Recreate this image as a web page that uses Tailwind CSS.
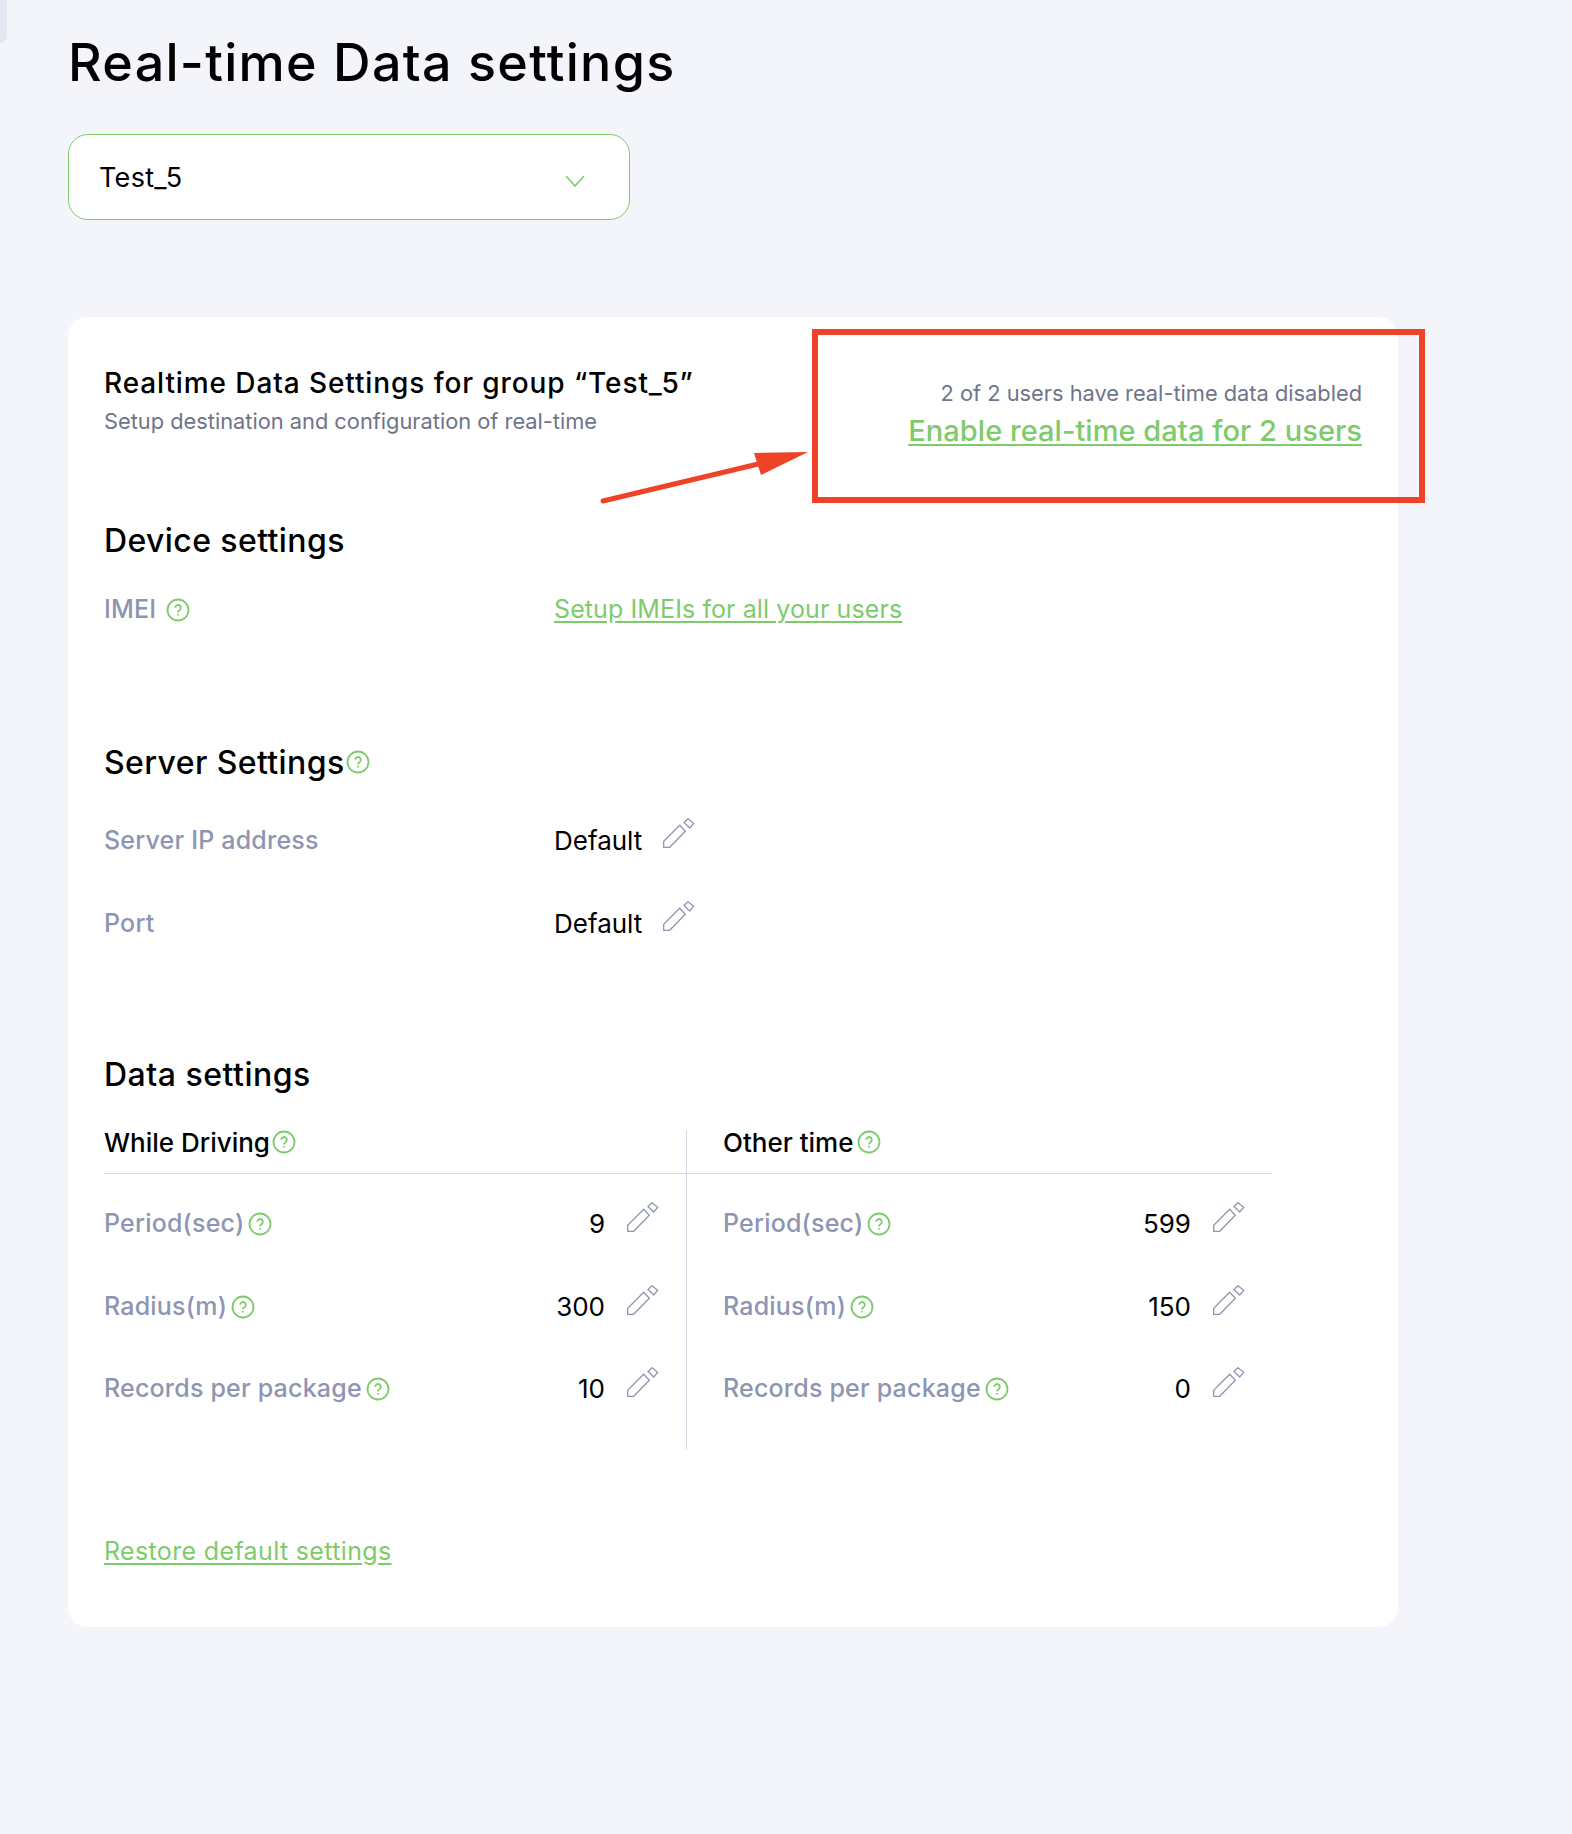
<!DOCTYPE html>
<html lang="en">
<head>
    <meta charset="UTF-8">
    <meta name="viewport" content="width=device-width, initial-scale=1.0">
    <title>Real-time Data settings</title>
    <script src="https://cdn.jsdelivr.net/npm/@tailwindcss/browser@4"></script>
</head>
<body class="bg-[#f3f5fa] text-black font-['Inter',sans-serif]">
    <div class="relative min-h-[1834px] w-[1572px] overflow-hidden">
        <!-- sliver of the collapsed sidebar -->
        <div class="absolute left-0 top-0 w-[7px] h-[43px] bg-[#e4e8f3] rounded-br-md"></div>

        <main class="pl-[68px] pt-[32px] w-[1398px]">
            <h1 class="text-[52px] leading-[62px] font-medium tracking-[1.3px]">Real-time Data settings</h1>

            <div class="mt-[40px] w-[562px] h-[86px] bg-white border border-[#7ecb6c] rounded-[20px] pl-[30px] pr-[44px] flex items-center justify-between">
                <span class="text-[27px] tracking-[.3px] mt-[3px]">Test_5</span>
                <svg class="w-[20px] h-[12px] mt-[8px]" viewBox="0 0 20 12" fill="none" stroke="#7ecb6c" stroke-width="1.6"><path d="M1 1l9 10 9-10"/></svg>
            </div>

            <section class="mt-[97px] bg-white rounded-[20px] h-[1310px] pl-[36px] pr-[36px] pt-[48px]">
                <div class="flex justify-between">
                    <div>
                        <h2 class="text-[28px] leading-[36px] font-medium tracking-[.9px]">Realtime Data Settings for group “Test_5”</h2>
                        <p class="mt-[5px] text-[21.8px] leading-[30px] text-[#6f7489]">Setup destination and configuration of real-time</p>
                    </div>
                    <div class="text-right pt-[13px]">
                        <p class="text-[21.8px] leading-[30px] text-[#6f7489]">2 of 2 users have real-time data disabled</p>
                        <a href="#" class="block mt-[1px] text-[29px] leading-[44px] font-medium tracking-[.05px] text-[#7ecb6c] underline decoration-2 underline-offset-[3px]">Enable real-time data for 2 users</a>
                    </div>
                </div>

                <h3 class="mt-[68px] text-[32px] leading-[40px] font-medium tracking-[.4px]">Device settings</h3>
                <div class="mt-[29px] h-[40px] flex items-center">
                    <div class="w-[450px] flex items-center gap-[10px] text-[25px] font-medium tracking-[.2px] text-[#8e95b3]">
                        IMEI
                        <svg class="w-[24px] h-[24px]" viewBox="0 0 24 24" fill="none" stroke="#7ecb6c" stroke-width="1.8"><circle cx="12" cy="12" r="10.5"/><path d="M9.2 9.8a2.8 2.8 0 1 1 4.3 2.4c-1 .6-1.5 1.2-1.5 2.3M12 16v1.6"/></svg>
                    </div>
                    <a href="#" class="text-[25px] tracking-[.1px] text-[#7ecb6c] underline underline-offset-[3px]">Setup IMEIs for all your users</a>
                </div>

                <div class="mt-[113px] h-[40px] flex items-center gap-[4px]">
                    <h3 class="text-[32px] leading-[40px] font-medium tracking-[.4px]">Server Settings</h3>
                    <svg class="w-[24px] h-[24px] -mt-[3px] -ml-[3px]" viewBox="0 0 24 24" fill="none" stroke="#7ecb6c" stroke-width="1.8"><circle cx="12" cy="12" r="10.5"/><path d="M9.2 9.8a2.8 2.8 0 1 1 4.3 2.4c-1 .6-1.5 1.2-1.5 2.3M12 16v1.6"/></svg>
                </div>
                <div class="mt-[38px] h-[40px] flex items-center">
                    <div class="w-[450px] text-[25px] font-medium tracking-[.2px] text-[#8e95b3]">Server IP address</div>
                    <span class="text-[26px] w-[109px] -mt-[2px]">Default</span>
                    <svg class="w-[32px] h-[30px] -translate-y-[8px]" viewBox="0 0 32 30" fill="none" stroke="#8e95b3" stroke-width="1.3"><path d="M.7 23.3v6h6L22.3 13.3l-5.6-6zM25 .7l5.7 4.6-4 4.7-5.7-5.5z"/></svg>
                </div>
                <div class="mt-[43px] h-[40px] flex items-center">
                    <div class="w-[450px] text-[25px] font-medium tracking-[.2px] text-[#8e95b3]">Port</div>
                    <span class="text-[26px] w-[109px] -mt-[2px]">Default</span>
                    <svg class="w-[32px] h-[30px] -translate-y-[8px]" viewBox="0 0 32 30" fill="none" stroke="#8e95b3" stroke-width="1.3"><path d="M.7 23.3v6h6L22.3 13.3l-5.6-6zM25 .7l5.7 4.6-4 4.7-5.7-5.5z"/></svg>
                </div>

                <h3 class="mt-[111px] text-[32px] leading-[40px] font-medium tracking-[.5px]">Data settings</h3>
                <div class="mt-[35px] w-[1168px] grid grid-cols-[583px_585px] h-[319px]">
                    <!-- While Driving -->
                    <div class="border-r border-[#d2d5e2]">
                        <div class="h-[44px] pb-[19px] border-b border-[#d2d5e2] flex items-center gap-[2px] text-[26px] font-medium">
                            While Driving
                            <svg class="w-[24px] h-[24px]" viewBox="0 0 24 24" fill="none" stroke="#7ecb6c" stroke-width="1.8"><circle cx="12" cy="12" r="10.5"/><path d="M9.2 9.8a2.8 2.8 0 1 1 4.3 2.4c-1 .6-1.5 1.2-1.5 2.3M12 16v1.6"/></svg>
                        </div>
                        <div class="mt-[30px] h-[40px] flex items-center pr-[27px]">
                            <div class="flex items-center gap-[4px] text-[25px] font-medium tracking-[.2px] text-[#8e95b3]">Period(sec)
                                <svg class="w-[24px] h-[24px]" viewBox="0 0 24 24" fill="none" stroke="#7ecb6c" stroke-width="1.8"><circle cx="12" cy="12" r="10.5"/><path d="M9.2 9.8a2.8 2.8 0 1 1 4.3 2.4c-1 .6-1.5 1.2-1.5 2.3M12 16v1.6"/></svg>
                            </div>
                            <span class="ml-auto text-[26px] mr-[22px] -mt-[2px]">9</span>
                            <svg class="w-[32px] h-[30px] -translate-y-[7px]" viewBox="0 0 32 30" fill="none" stroke="#8e95b3" stroke-width="1.3"><path d="M.7 23.3v6h6L22.3 13.3l-5.6-6zM25 .7l5.7 4.6-4 4.7-5.7-5.5z"/></svg>
                        </div>
                        <div class="mt-[43px] h-[40px] flex items-center pr-[27px]">
                            <div class="flex items-center gap-[4px] text-[25px] font-medium tracking-[.2px] text-[#8e95b3]">Radius(m)
                                <svg class="w-[24px] h-[24px]" viewBox="0 0 24 24" fill="none" stroke="#7ecb6c" stroke-width="1.8"><circle cx="12" cy="12" r="10.5"/><path d="M9.2 9.8a2.8 2.8 0 1 1 4.3 2.4c-1 .6-1.5 1.2-1.5 2.3M12 16v1.6"/></svg>
                            </div>
                            <span class="ml-auto text-[26px] mr-[22px] -mt-[2px]">300</span>
                            <svg class="w-[32px] h-[30px] -translate-y-[7px]" viewBox="0 0 32 30" fill="none" stroke="#8e95b3" stroke-width="1.3"><path d="M.7 23.3v6h6L22.3 13.3l-5.6-6zM25 .7l5.7 4.6-4 4.7-5.7-5.5z"/></svg>
                        </div>
                        <div class="mt-[42px] h-[40px] flex items-center pr-[27px]">
                            <div class="flex items-center gap-[4px] text-[25px] font-medium tracking-[.2px] text-[#8e95b3]">Records per package
                                <svg class="w-[24px] h-[24px]" viewBox="0 0 24 24" fill="none" stroke="#7ecb6c" stroke-width="1.8"><circle cx="12" cy="12" r="10.5"/><path d="M9.2 9.8a2.8 2.8 0 1 1 4.3 2.4c-1 .6-1.5 1.2-1.5 2.3M12 16v1.6"/></svg>
                            </div>
                            <span class="ml-auto text-[26px] mr-[22px] -mt-[2px]">10</span>
                            <svg class="w-[32px] h-[30px] -translate-y-[7px]" viewBox="0 0 32 30" fill="none" stroke="#8e95b3" stroke-width="1.3"><path d="M.7 23.3v6h6L22.3 13.3l-5.6-6zM25 .7l5.7 4.6-4 4.7-5.7-5.5z"/></svg>
                        </div>
                    </div>
                    <!-- Other time -->
                    <div>
                        <div class="h-[44px] pb-[19px] pl-[36px] border-b border-[#d2d5e2] flex items-center gap-[4px] text-[26px] font-medium">
                            Other time
                            <svg class="w-[24px] h-[24px]" viewBox="0 0 24 24" fill="none" stroke="#7ecb6c" stroke-width="1.8"><circle cx="12" cy="12" r="10.5"/><path d="M9.2 9.8a2.8 2.8 0 1 1 4.3 2.4c-1 .6-1.5 1.2-1.5 2.3M12 16v1.6"/></svg>
                        </div>
                        <div class="mt-[30px] h-[40px] flex items-center pl-[36px] pr-[27px]">
                            <div class="flex items-center gap-[4px] text-[25px] font-medium tracking-[.2px] text-[#8e95b3]">Period(sec)
                                <svg class="w-[24px] h-[24px]" viewBox="0 0 24 24" fill="none" stroke="#7ecb6c" stroke-width="1.8"><circle cx="12" cy="12" r="10.5"/><path d="M9.2 9.8a2.8 2.8 0 1 1 4.3 2.4c-1 .6-1.5 1.2-1.5 2.3M12 16v1.6"/></svg>
                            </div>
                            <span class="ml-auto text-[26px] mr-[22px] -mt-[2px]">599</span>
                            <svg class="w-[32px] h-[30px] -translate-y-[7px]" viewBox="0 0 32 30" fill="none" stroke="#8e95b3" stroke-width="1.3"><path d="M.7 23.3v6h6L22.3 13.3l-5.6-6zM25 .7l5.7 4.6-4 4.7-5.7-5.5z"/></svg>
                        </div>
                        <div class="mt-[43px] h-[40px] flex items-center pl-[36px] pr-[27px]">
                            <div class="flex items-center gap-[4px] text-[25px] font-medium tracking-[.2px] text-[#8e95b3]">Radius(m)
                                <svg class="w-[24px] h-[24px]" viewBox="0 0 24 24" fill="none" stroke="#7ecb6c" stroke-width="1.8"><circle cx="12" cy="12" r="10.5"/><path d="M9.2 9.8a2.8 2.8 0 1 1 4.3 2.4c-1 .6-1.5 1.2-1.5 2.3M12 16v1.6"/></svg>
                            </div>
                            <span class="ml-auto text-[26px] mr-[22px] -mt-[2px]">150</span>
                            <svg class="w-[32px] h-[30px] -translate-y-[7px]" viewBox="0 0 32 30" fill="none" stroke="#8e95b3" stroke-width="1.3"><path d="M.7 23.3v6h6L22.3 13.3l-5.6-6zM25 .7l5.7 4.6-4 4.7-5.7-5.5z"/></svg>
                        </div>
                        <div class="mt-[42px] h-[40px] flex items-center pl-[36px] pr-[27px]">
                            <div class="flex items-center gap-[4px] text-[25px] font-medium tracking-[.2px] text-[#8e95b3]">Records per package
                                <svg class="w-[24px] h-[24px]" viewBox="0 0 24 24" fill="none" stroke="#7ecb6c" stroke-width="1.8"><circle cx="12" cy="12" r="10.5"/><path d="M9.2 9.8a2.8 2.8 0 1 1 4.3 2.4c-1 .6-1.5 1.2-1.5 2.3M12 16v1.6"/></svg>
                            </div>
                            <span class="ml-auto text-[26px] mr-[22px] -mt-[2px]">0</span>
                            <svg class="w-[32px] h-[30px] -translate-y-[7px]" viewBox="0 0 32 30" fill="none" stroke="#8e95b3" stroke-width="1.3"><path d="M.7 23.3v6h6L22.3 13.3l-5.6-6zM25 .7l5.7 4.6-4 4.7-5.7-5.5z"/></svg>
                        </div>
                    </div>
                </div>

                <a href="#" class="block mt-[82px] text-[25px] leading-[40px] tracking-[.35px] text-[#7ecb6c] underline underline-offset-[3px]">Restore default settings</a>
            </section>
        </main>

        <!-- screenshot annotation laid over the page -->
        <div class="absolute left-[812px] top-[329px] w-[613px] h-[174px] border-[6px] border-[#ee4326]"></div>
        <svg class="absolute left-[596px] top-[445px] w-[216px] h-[60px]" viewBox="0 0 216 60" fill="none">
            <path d="M7 56L175 16" stroke="#ee4326" stroke-width="5" stroke-linecap="round"/>
            <path d="M212 7L158 8L165 30z" fill="#ee4326"/>
        </svg>
    </div>
</body>
</html>
